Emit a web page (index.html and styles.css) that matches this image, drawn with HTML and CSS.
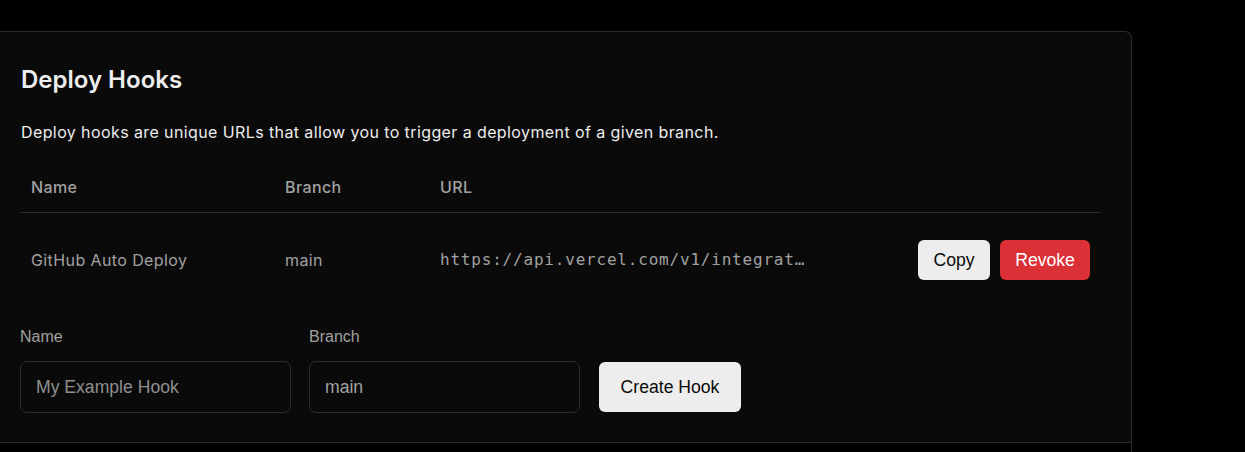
FILE: index.html
```html
<!DOCTYPE html>
<html lang="en">
<head>
<meta charset="utf-8">
<title>Deploy Hooks</title>
<link rel="stylesheet" href="styles.css">
</head>
<body>
<section class="card">
  <div class="card-body">
    <h2 class="title">Deploy Hooks</h2>
    <p class="desc">Deploy hooks are unique URLs that allow you to trigger a deployment of a given branch.</p>
    <div class="table">
      <div class="row head">
        <div class="cell">Name</div>
        <div class="cell">Branch</div>
        <div class="cell">URL</div>
        <div class="cell"></div>
      </div>
      <div class="row body">
        <div class="cell">GitHub Auto Deploy</div>
        <div class="cell">main</div>
        <div class="cell mono">https://api.vercel.com/v1/integrat…</div>
        <div class="cell actions">
          <button class="btn btn-light btn-copy">Copy</button>
          <button class="btn btn-red btn-revoke">Revoke</button>
        </div>
      </div>
    </div>
    <form class="form">
      <label class="field">
        <span class="label">Name</span>
        <input class="input" type="text" placeholder="My Example Hook">
      </label>
      <label class="field">
        <span class="label">Branch</span>
        <input class="input" type="text" value="main">
      </label>
      <button type="button" class="btn btn-light btn-create">Create Hook</button>
    </form>
  </div>
  <div class="card-footer"></div>
</section>
</body>
</html>
```
FILE: styles.css
```css
* { box-sizing: border-box; }
html, body { margin: 0; padding: 0; }
body {
  background: #000;
  color: #ededed;
  font-family: Inter, "Noto Sans", sans-serif;
  height: 452px;
  overflow: hidden;
}
.card {
  margin: 31px 0 0 -9px;
  width: 1141px;
  background: #0a0a0a;
  border: 1px solid #2c2c2c;
  border-bottom: 0;
  border-radius: 0 7px 0 0;
  overflow: hidden;
}
.card-body {
  padding: 32px 30px 29px 29px;
}
.title {
  margin: 0;
  font-size: 24px;
  line-height: 32px;
  font-weight: 600;
  color: #ededed;
}
.desc {
  margin: 24px 0 0;
  font-size: 16px;
  line-height: 24px;
  letter-spacing: 0.4px;
  color: #ededed;
}
.table { margin-top: 20px; }
.row {
  display: grid;
  grid-template-columns: 254px 155px 1fr auto;
  align-items: center;
}
.row.head {
  border-bottom: 1px solid #2c2c2c;
}
.row.head .cell {
  padding: 11px 10px 13px;
  font-size: 16px;
  line-height: 24px;
  font-weight: 500;
  letter-spacing: 0.4px;
  color: #a1a1a1;
}
.row.body .cell {
  padding: 27px 10px;
  font-size: 16px;
  line-height: 24px;
  letter-spacing: 0.4px;
  color: #a1a1a1;
}
.row.body .cell.actions {
  padding: 27px 11px 27px 10px;
  display: flex;
  gap: 10px;
}
.row.body .cell.mono {
  font-family: "DejaVu Sans Mono", "Liberation Mono", monospace;
  font-size: 16px;
  letter-spacing: 0.8px;
  white-space: nowrap;
}
.btn {
  border: 0;
  border-radius: 6px;
  font-family: "Liberation Sans", Arial, sans-serif;
  font-size: 17.6px;
  height: 40px;
  padding: 0;
  cursor: pointer;
}
.btn-light { background: #ededed; color: #0a0a0a; }
.btn-red { background: #da3036; color: #fff; }
.btn-copy { width: 72px; }
.btn-revoke { width: 90px; }
.form {
  margin: 20px 0 0 -1px;
  display: flex;
  align-items: flex-end;
  gap: 18px;
}
.field {
  display: flex;
  flex-direction: column;
  gap: 14px;
}
.label {
  font-family: "Liberation Sans", Arial, sans-serif;
  font-size: 16px;
  line-height: 20px;
  color: #a1a1a1;
}
.input {
  width: 271px;
  height: 52px;
  margin: 0;
  padding: 0 15px;
  background: #0a0a0a;
  border: 1px solid #2c2c2c;
  border-radius: 7px;
  font-family: "Liberation Sans", Arial, sans-serif;
  font-size: 17.6px;
  color: #a1a1a1;
  outline: none;
}
.input::placeholder { color: #8f8f8f; opacity: 1; }
.btn-create {
  width: 142px;
  height: 50px;
  margin: 0 0 1px 1px;
}
.card-footer {
  border-top: 1px solid #2c2c2c;
  background: #000;
  height: 10px;
}
```
